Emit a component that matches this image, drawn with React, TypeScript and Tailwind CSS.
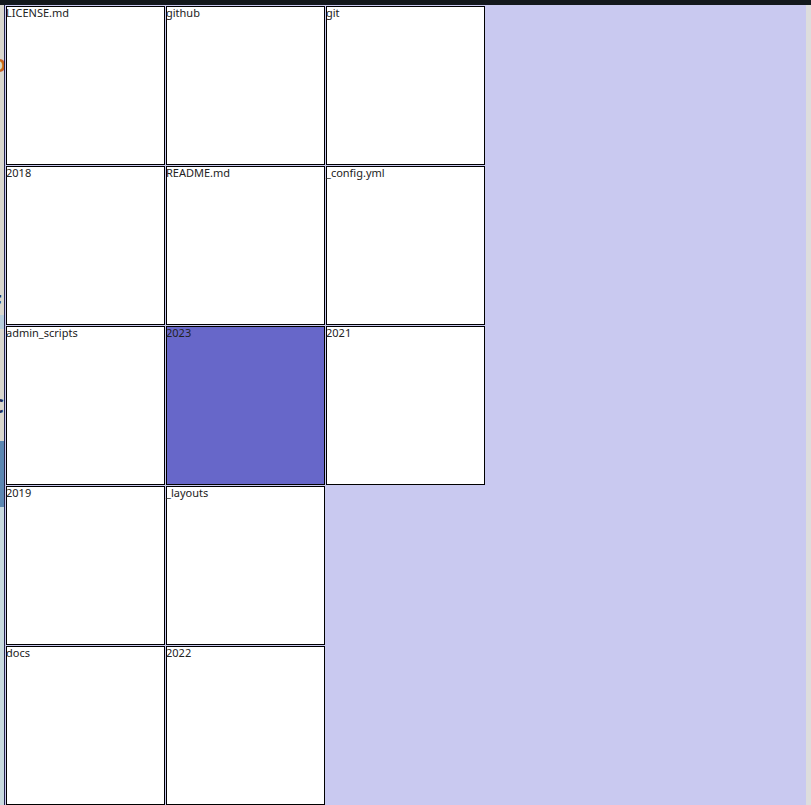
import React from "react";

const rows: string[][] = [
  ["LICENSE.md", "github", "git"],
  ["2018", "README.md", "_config.yml"],
  ["admin_scripts", "2023", "2021"],
  ["2019", "_layouts"],
  ["docs", "2022"],
];

function Tile({ name }: { name: string }) {
  const active = name === "2023";
  return (
    <div
      className={
        "h-[159px] w-[159px] shadow-[inset_0_0_0_1px_#000] text-[11px] leading-[13px] text-[#222] " +
        (active ? "bg-[#6767c9]" : "bg-white")
      }
      style={{ fontFamily: '"Noto Sans", "Open Sans", sans-serif' }}
    >
      {name}
    </div>
  );
}

export default function App() {
  return (
    <div className="relative h-[805px] w-[811px] overflow-hidden bg-[#dad8cf]">
      <div className="h-[5px] w-full bg-[#13181c]" />
      {/* underlying page, mostly hidden behind the overlay */}
      <div
        className="flex flex-col"
        style={{ fontFamily: '"Noto Sans", sans-serif' }}
      >
        <div className="h-[48px]" />
        <div className="-ml-[8px] text-[18px] font-bold leading-[24px] text-[#c8651b]">O</div>
        <div className="h-[212px]" />
        <div className="-ml-[9px] text-[20px] font-bold leading-[26px] text-[#1c2a5a]">F</div>
        <div className="h-[14px] w-full bg-[#b8cfde]" />
        <div className="h-[64px]" />
        <div className="-ml-[9px] text-[20px] font-bold leading-[26px] text-[#1c2a5a]">C</div>
        <div className="h-[22px]" />
        <div className="h-[66px] w-full bg-[#5b87b2]" />
        <div className="h-[300px] w-full bg-[#c9dbe0]" />
      </div>
      <div className="absolute right-0 top-[5px] h-[800px] w-[6px] bg-[#dddddd]" />
      {/* overlay panel */}
      <div className="absolute left-[4px] top-[5px] h-[800px] w-[802px] border-l border-[#23234a] bg-[#c9c9f0] pl-px pt-px">
        <div className="grid grid-cols-[repeat(3,159px)] gap-px">
          {rows.map((r, ri) =>
            r.map((n, ci) => (
              <div
                key={n}
                className={ci === 0 ? "col-start-1" : ""}
                data-row={ri}
              >
                <Tile name={n} />
              </div>
            ))
          )}
        </div>
      </div>
    </div>
  );
}
